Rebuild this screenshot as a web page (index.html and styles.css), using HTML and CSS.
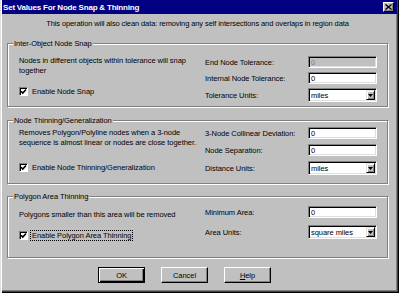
FILE: index.html
```html
<!DOCTYPE html>
<html>
<head>
<meta charset="utf-8">
<title>Set Values For Node Snap &amp; Thinning</title>
<link rel="stylesheet" href="styles.css">
</head>
<body>
<div class="window">
  <div class="titlebar">
    <span class="title">Set Values For Node Snap &amp; Thinning</span>
    <span class="close"><svg width="7" height="6" viewBox="0 0 7 6"><path d="M0.5 0.5 L6.5 5.5 M6.5 0.5 L0.5 5.5" stroke="#000" stroke-width="1.4" fill="none"/></svg></span>
  </div>
  <div class="content">
    <p class="intro">This operation will also clean data: removing any self intersections and overlaps in region data</p>

    <div class="group g1">
      <span class="legend">Inter-Object Node Snap</span>
      <div class="left">
        <p class="desc">Nodes in different objects within tolerance will snap<br>together</p>
        <div class="check"><span class="box"><svg width="7" height="7" viewBox="0 0 7 7"><path d="M1 3.2 L2.8 5 L6 1.5" stroke="#000" stroke-width="1.6" fill="none"/></svg></span><span>Enable Node Snap</span></div>
      </div>
      <div class="right">
        <span class="lbl">End Node Tolerance:</span><span class="edit disabled">0</span>
        <span class="lbl">Internal Node Tolerance:</span><span class="edit">0</span>
        <span class="lbl">Tolerance Units:</span><span class="select"><span class="val">miles</span><span class="drop"><svg width="5" height="3" viewBox="0 0 5 3"><path d="M0 0 H5 L2.5 3 Z" fill="#000"/></svg></span></span>
      </div>
    </div>

    <div class="group g2">
      <span class="legend">Node Thinning/Generalization</span>
      <div class="left">
        <p class="desc">Removes Polygon/Polyline nodes when a 3-node<br>sequence is almost linear or nodes are close together.</p>
        <div class="check"><span class="box"><svg width="7" height="7" viewBox="0 0 7 7"><path d="M1 3.2 L2.8 5 L6 1.5" stroke="#000" stroke-width="1.6" fill="none"/></svg></span><span>Enable Node Thinning/Generalization</span></div>
      </div>
      <div class="right">
        <span class="lbl">3-Node Collinear Deviation:</span><span class="edit">0</span>
        <span class="lbl">Node Separation:</span><span class="edit">0</span>
        <span class="lbl">Distance Units:</span><span class="select"><span class="val">miles</span><span class="drop"><svg width="5" height="3" viewBox="0 0 5 3"><path d="M0 0 H5 L2.5 3 Z" fill="#000"/></svg></span></span>
      </div>
    </div>

    <div class="group g3">
      <span class="legend">Polygon Area Thinning</span>
      <div class="left">
        <p class="desc">Polygons smaller than this area will be removed</p>
        <div class="check focus-check"><span class="box"><svg width="7" height="7" viewBox="0 0 7 7"><path d="M1 3.2 L2.8 5 L6 1.5" stroke="#000" stroke-width="1.6" fill="none"/></svg></span><span class="focus">Enable Polygon Area Thinning</span></div>
      </div>
      <div class="right">
        <span class="lbl">Minimum Area:</span><span class="edit">0</span>
        <span class="lbl">Area Units:</span><span class="select"><span class="val">square miles</span><span class="drop"><svg width="5" height="3" viewBox="0 0 5 3"><path d="M0 0 H5 L2.5 3 Z" fill="#000"/></svg></span></span>
      </div>
    </div>

    <div class="buttons">
      <span class="btn default">OK</span>
      <span class="btn">Cancel</span>
      <span class="btn"><u>H</u>elp</span>
    </div>
  </div>
</div>
</body>
</html>
```

FILE: styles.css
```css
html, body {
  margin: 0;
  padding: 0;
  background: #c0c0c0;
}

body {
  font-family: "Liberation Sans", Arial, sans-serif;
  font-size: 7.5px;
  letter-spacing: -0.05px;
  color: #000;
}

.window {
  width: 399px;
  height: 293px;
  box-sizing: border-box;
  background: #c0c0c0;
  box-shadow: inset 1px 0 #dfdfdf, inset 2px 0 #fff, inset -1px -1px #000, inset -2px -2px #404040, inset -3px -3px #808080;
  display: flex;
  flex-direction: column;
}

.titlebar {
  height: 14px;
  margin: 0 2px;
  background: #000080;
  display: flex;
  align-items: center;
  justify-content: space-between;
  padding: 0 3px 0 1px;
}

.title {
  color: #fff;
  font-weight: bold;
  font-size: 8px;
  letter-spacing: -0.2px;
}

.close {
  width: 11px;
  height: 10px;
  box-sizing: border-box;
  background: #c0c0c0;
  border: 1px solid;
  border-color: #fff #000 #000 #fff;
  box-shadow: inset -1px -1px #808080;
  display: flex;
  align-items: center;
  justify-content: center;
}

.close svg { display: block; }

.content {
  padding: 0 11px 0 7px;
  display: flex;
  flex-direction: column;
}

.intro {
  margin: 5px 0 0 0;
  line-height: 10px;
  text-align: center;
  letter-spacing: -0.1px;
}

.group {
  position: relative;
  box-sizing: border-box;
  border: 1px solid #808080;
  box-shadow: inset 1px 1px 0 #fff, 1px 1px 0 #fff;
  display: flex;
}

.g1 { margin-top: 14px; height: 64px; }
.g2 { margin-top: 13px; height: 64px; }
.g3 { margin-top: 12px; height: 62px; }

.legend {
  position: absolute;
  top: -5px;
  left: 5px;
  padding: 0 1px;
  background: #c0c0c0;
  line-height: 10px;
}

.left {
  flex: 1;
  padding-left: 11px;
}

.g1 .left { padding-top: 12px; }
.g2 .left { padding-top: 7px; }
.g3 .left { padding-top: 13px; }

.desc {
  margin: 0;
  line-height: 9.5px;
}

.check {
  display: flex;
  align-items: center;
  gap: 4px;
  height: 10px;
}

.g1 .check { margin-top: 11px; }
.g2 .check { margin-top: 15px; }
.g3 .check { margin-top: 10.5px; gap: 2px; }

.box {
  width: 9px;
  height: 9px;
  box-sizing: border-box;
  background: #fff;
  border: 1px solid;
  border-color: #808080 #fff #fff #808080;
  box-shadow: inset 1px 1px #000;
  display: flex;
  align-items: center;
  justify-content: center;
}

.box svg { display: block; }

.focus {
  border: 1px dotted #000;
  padding: 0 1px;
  line-height: 9px;
}

.right {
  width: 172px;
  margin-right: 10px;
  display: grid;
  grid-template-columns: 103px 69px;
  align-content: start;
  align-items: center;
}

.g1 .right { padding-top: 12px; row-gap: 4px; }
.g2 .right { padding-top: 6px; row-gap: 5px; }
.g3 .right { padding-top: 9px; row-gap: 7px; }

.edit, .select {
  box-sizing: border-box;
  background: #fff;
  border: 1px solid;
  border-color: #808080 #fff #fff #808080;
  box-shadow: inset 1px 1px #000, inset -1px -1px #dfdfdf;
  padding-left: 2px;
  display: flex;
  align-items: center;
}

.edit { height: 12px; }

.edit.disabled {
  background: #c0c0c0;
  color: #808080;
}

.select {
  height: 14px;
  justify-content: space-between;
  padding-right: 1px;
}

.drop {
  width: 9px;
  height: 10px;
  box-sizing: border-box;
  background: #c0c0c0;
  border: 1px solid;
  border-color: #dfdfdf #000 #000 #dfdfdf;
  box-shadow: inset 1px 1px #fff, inset -1px -1px #808080;
  display: flex;
  align-items: center;
  justify-content: center;
}

.drop svg { display: block; }

.buttons {
  display: flex;
  gap: 16px;
  margin-top: 9px;
  padding-left: 91px;
}

.btn {
  width: 47px;
  height: 16px;
  box-sizing: border-box;
  border: 1px solid;
  border-color: #fff #000 #000 #fff;
  box-shadow: inset -1px -1px #808080;
  display: flex;
  align-items: center;
  justify-content: center;
}

.btn.default {
  border: 1px solid #000;
  box-shadow: inset 1px 1px #fff, inset -1px -1px #000, inset -2px -2px #808080;
}

.btn u { text-decoration: underline; }
```
